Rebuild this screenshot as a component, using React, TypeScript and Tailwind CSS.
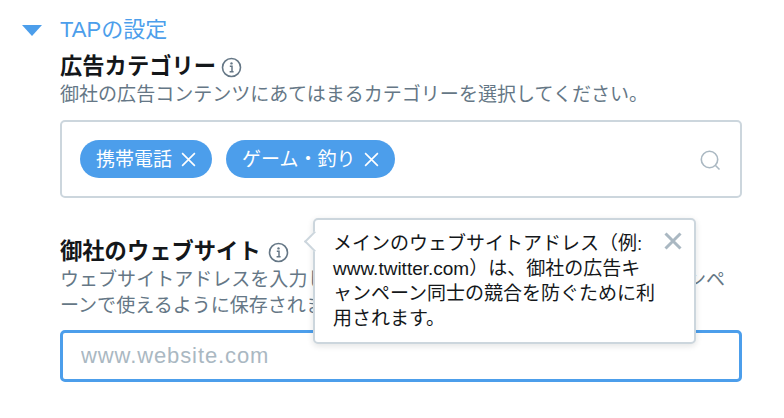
const fontClass = "font-['Liberation_Sans','Noto_Sans_CJK_JP',sans-serif]";

function InfoIcon() {
    return (
        <svg width="21" height="21" viewBox="0 0 21 21" fill="none" className="shrink-0">
            <circle cx="10.5" cy="10.5" r="9" stroke="#657786" strokeWidth="1.6" />
            <circle cx="10.5" cy="6.4" r="1.2" fill="#657786" />
            <path d="M8.8 9.3h2.2v5.2M8.6 14.8h4" stroke="#657786" strokeWidth="1.5" />
        </svg>
    );
}

function CloseIcon({ size, color, width }: { size: number; color: string; width: number }) {
    return (
        <svg width={size} height={size} viewBox="0 0 16 16" fill="none" className="shrink-0">
            <path d="M2 2l12 12M14 2L2 14" stroke={color} strokeWidth={width} />
        </svg>
    );
}

function Tag({ label }: { label: string }) {
    return (
        <div className="flex h-[38px] items-center gap-[8px] rounded-[19px] bg-[#4c9eeb] pl-4 pr-[15px] text-[19px] text-white">
            <span className="relative top-[1px]">{label}</span>
            <CloseIcon size={17} color="#ffffff" width={1.5} />
        </div>
    );
}

export default function App() {
    return (
        <div className={`h-[418px] w-[784px] overflow-hidden bg-white pl-[22px] pt-[17px] ${fontClass}`}>
            {/* セクション見出し */}
            <div className="flex h-[26px] items-center">
                <svg width="20" height="11" viewBox="0 0 20 11" className="shrink-0">
                    <path d="M0 0h20L10 11z" fill="#4c9eeb" />
                </svg>
                <span className="ml-[18px] text-[22px] leading-[26px] text-[#4c9eeb]">TAPの設定</span>
            </div>

            <div className="ml-[38px] w-[682px]">
                {/* 広告カテゴリー */}
                <div className="mt-[10px] flex h-[28px] items-center gap-[5px]">
                    <h2 className="text-[22.3px] font-bold leading-[28px] text-[#14171a]">広告カテゴリー</h2>
                    <InfoIcon />
                </div>
                <p className="text-[19.05px] leading-[27px] text-[#657786]">
                    御社の広告コンテンツにあてはまるカテゴリーを選択してください。
                </p>
                <div className="mt-[12px] flex h-[78px] items-center justify-between rounded-[5px] border-2 border-[#ccd6dd] pl-[18px] pr-[19px]">
                    <div className="flex gap-[14px]">
                        <Tag label="携帯電話" />
                        <Tag label="ゲーム・釣り" />
                    </div>
                    <svg width="21" height="21" viewBox="0 0 21 21" fill="none" className="mt-[3px]">
                        <circle cx="9.5" cy="9.5" r="8.2" stroke="#aab8c2" strokeWidth="1.6" />
                        <path d="M15.5 15.5l4 4" stroke="#aab8c2" strokeWidth="1.6" />
                    </svg>
                </div>

                {/* 御社のウェブサイト */}
                <div className="relative mt-[20px] pt-[20px]">
                    <div className="flex h-[28px] items-center gap-[7px]">
                        <h2 className="text-[22.3px] font-bold leading-[28px] text-[#14171a]">御社のウェブサイト</h2>
                        <InfoIcon />
                    </div>
                    <p className="pt-[1px] text-[19.05px] leading-[26px] text-[#657786]">
                        ウェブサイトアドレスを入力してください。このアドレスは、今後のキャンペ
                        <br />
                        ーンで使えるように保存されます。
                    </p>
                    <input
                        readOnly
                        placeholder="www.website.com"
                        className="mt-[11px] block h-[52px] w-full rounded-[5px] border-[3px] border-[#4c9eeb] px-[18px] text-[22px] tracking-[0.9px] outline-none placeholder:text-[#aab8c2]"
                    />

                    {/* ツールチップ */}
                    <div className="absolute left-[253px] top-0 h-[126px] w-[383px] rounded-[5px] border-2 border-[#ccd6dd] bg-white pl-[18px] pr-[6px] pt-[11px] text-[19px] leading-[25px] text-[#14171a] shadow-[0_2px_6px_rgba(20,23,26,0.12)]">
                        <div className="absolute left-[-8px] top-[14px] h-[15px] w-[15px] rotate-45 border-b-2 border-l-2 border-[#ccd6dd] bg-white" />
                        <div className="relative">
                            メインのウェブサイトアドレス（例:
                            <br />
                            www.twitter.com）は、御社の広告キ
                            <br />
                            ャンペーン同士の競合を防ぐために利
                            <br />
                            用されます。
                        </div>
                        <div className="absolute right-[11px] top-[11px]">
                            <CloseIcon size={20} color="#aab8c2" width={2.4} />
                        </div>
                    </div>
                </div>
            </div>
        </div>
    );
}
